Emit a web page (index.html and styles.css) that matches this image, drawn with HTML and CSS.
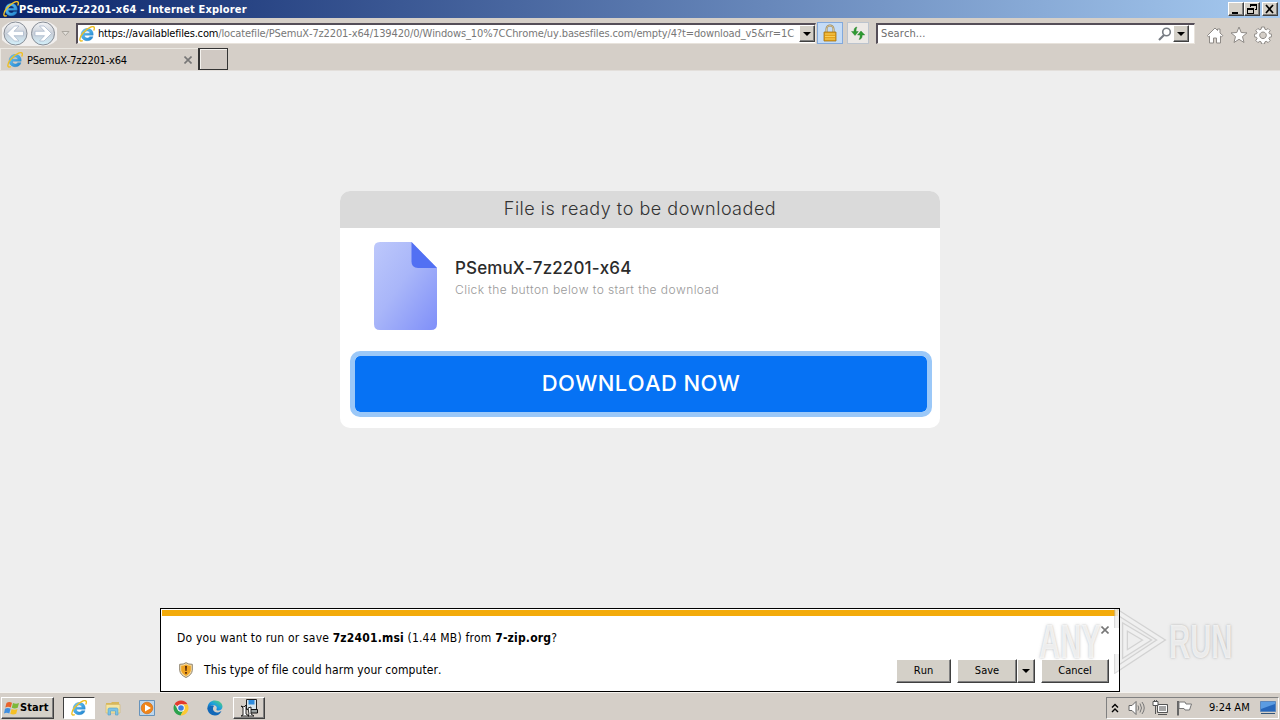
FILE: index.html
```html
<!DOCTYPE html>
<html>
  <head>
    <meta charset="utf-8" />
    <title>PSemuX-7z2201-x64 - Internet Explorer</title>
    <link rel="stylesheet" href="styles.css">
  </head>
  <body>
    <svg class="defs">
      <defs>
        <linearGradient id="ie-blue" x1="0" y1="0" x2="1" y2="1">
          <stop offset="0" stop-color="#6fd0f8" />
          <stop offset="1" stop-color="#1b7fce" />
        </linearGradient>
        <linearGradient id="paper" x1="0" y1="0" x2="1" y2="1">
          <stop offset="0" stop-color="#bdc8fb" />
          <stop offset="0.45" stop-color="#a9b6f9" />
          <stop offset="1" stop-color="#7f8ff9" />
        </linearGradient>
        <linearGradient id="nav" x1="0" y1="0" x2="0" y2="1">
          <stop offset="0" stop-color="#f4f5f7" />
          <stop offset="0.5" stop-color="#c9cfd8" />
          <stop offset="1" stop-color="#d3f0fb" />
        </linearGradient>
        <linearGradient id="edge" x1="0" y1="1" x2="1" y2="0">
          <stop offset="0" stop-color="#0c59a4" />
          <stop offset="0.5" stop-color="#1b9de2" />
          <stop offset="1" stop-color="#5edb68" />
        </linearGradient>
        <symbol id="ie" viewBox="0 0 16 16">
          <path d="M14.200 9.200H5.400c.1 1.800 1.200 2.800 2.800 2.800 1.200 0 2-.5 2.400-1.300H14c-.8 2.600-2.800 4-5.700 4-3.700 0-6.100-2.400-6.100-6s2.500-6.200 6.200-6.200c3.800 0 6.100 2.600 5.800 6.700zM5.500 7.200h5.400c-.2-1.400-1.100-2.200-2.600-2.200s-2.500.8-2.800 2.200z" fill="url(#ie-blue)" stroke="#2d87c8" stroke-width=".4" />
          <path d="M3.800 14.600C-.3 16.500 0 11.700 4 7 8 2.300 14-.7 15.200 1.300c.5.900.1 2-.5 3.200" fill="none" stroke="#eebf25" stroke-width="1.400" />
        </symbol>
      </defs>
    </svg>

    <div class="titlebar">
      <svg class="icon16"><use href="#ie" /></svg>
      <span class="title">PSemuX-7z2201-x64 - Internet Explorer</span>
      <div class="window-buttons">
        <button class="win-btn"><svg viewBox="0 0 14 12"><path d="M3 9h6v2H3z" /></svg></button>
        <button class="win-btn"><svg viewBox="0 0 14 12"><path d="M5 1h7v6h-2V6h1V3H6v1H5zM2 5h7v6H2zm1 2v3h5V7z" fill-rule="evenodd" /></svg></button>
        <button class="win-btn close"><svg viewBox="0 0 14 12"><path d="M3 2l7 8M10 2l-7 8" stroke="#000" stroke-width="1.700" /></svg></button>
      </div>
    </div>

    <div class="toolbar">
      <svg class="nav-buttons" viewBox="0 0 74 30">
        <path d="M2 10Q8 3 16 3h27q8 0 14 7v12q-6 6-14 6H16q-8 0-14-6z" fill="#f1efee" />
        <g fill="url(#nav)" stroke="#878d96">
          <circle cx="15.500" cy="15.500" r="11.500" />
          <circle cx="43" cy="15.500" r="11.500" />
        </g>
        <g fill="#fff" stroke="#a3b3c8" stroke-width=".7">
          <path d="M7 15.500l7.500-7.500H19l-5 5.300h9.500v4.400H14l5 5.300h-4.500z" />
          <path d="M51.500 15.500L44 8h-4.500l5 5.300H35v4.400h9.500l-5 5.300H44z" />
        </g>
        <path d="M62 13.500h7l-3.500 4z" fill="#e4e1dc" stroke="#aaa69f" />
      </svg>
      <div class="field address">
        <svg class="icon16"><use href="#ie" /></svg>
        <div class="url"><span class="host">https://availablefiles.com</span><span class="path">/locatefile/PSemuX-7z2201-x64/139420/0/Windows_10%7CChrome/uy.basesfiles.com/empty/4?t=download_v5&amp;rr=1C</span></div>
        <button class="drop"></button>
      </div>
      <div class="tool lock">
        <svg viewBox="0 0 16 18">
          <path d="M4.500 9V5a3.500 3.500 0 0 1 7 0v4" fill="none" stroke="#98835b" stroke-width="2" />
          <path d="M4.500 8V5a3.500 3.500 0 0 1 7 0v3" fill="none" stroke="#e6d6a2" stroke-width=".8" />
          <path d="M2 8h12v9H2z" fill="#e5a21c" stroke="#a37314" stroke-width=".8" />
          <path d="M3 10h10M3 12.500h10M3 15h10" stroke="#f7cf5b" />
        </svg>
      </div>
      <div class="tool refresh">
        <svg viewBox="0 0 16 16">
          <path d="M7 2C4.500 2.200 4 4 4 6.500H1.500L5 10.500l3.300-4H6.100C6 4.500 6.200 3.500 7 2zM9 14.500c2.700-.3 3.200-2 3.200-4.500h2.600L11 6l-3.500 4h2.600c.1 2-.2 3-1.100 4.500z" fill="#2e9b32" stroke="#207a27" stroke-width=".4" />
        </svg>
      </div>
      <div class="field search">
        <span class="placeholder">Search...</span>
        <svg class="magnifier" viewBox="0 0 14 14"><circle cx="8.500" cy="5" r="3.800" fill="none" stroke="#777c83" stroke-width="1.600" /><path d="M6 8l-5 5" stroke="#777c83" stroke-width="2.200" /></svg>
        <button class="drop"></button>
      </div>
      <div class="ie-tools">
        <svg viewBox="0 0 18 18"><path d="M1.500 9.500L9 2l2.500 2.500V3h2.500v4l2.800 2.600-1.300 1.300-1-.8V17h-4v-5h-3v5h-4v-6.900l-1 .8z" /></svg>
        <svg viewBox="0 0 18 18"><path d="M9 1l2.200 5.500 5.800.4-4.500 3.700 1.500 5.900-5-3.200-5 3.200 1.500-5.900L1 6.900l5.800-.4z" /></svg>
        <svg viewBox="0 0 18 18"><path fill-rule="evenodd" d="M7.500 1h3l.4 2.200 1.300.6 1.900-1.300 2.100 2.100-1.300 1.900.6 1.300 2.100.4v2.600l-2.100.5-.6 1.300 1.300 1.900-2.100 2.100-1.900-1.300-1.300.6-.4 2.100h-3l-.4-2.100-1.300-.6-1.900 1.300-2.100-2.100 1.300-1.900-.6-1.300-2.100-.5V8.200l2.100-.4.6-1.300-1.300-1.900 2.100-2.100 1.900 1.300 1.300-.6zM9 6a3.300 3.300 0 1 0 .01 0z" /></svg>
      </div>
    </div>

    <div class="tabs">
      <div class="tab">
        <svg class="icon16"><use href="#ie" /></svg>
        <span class="tab-title">PSemuX-7z2201-x64</span>
        <svg class="x" viewBox="0 0 8 8"><path d="M.5.5l7 7M7.500.5l-7 7" /></svg>
      </div>
      <div class="new-tab"></div>
    </div>

    <div class="page">
      <div class="card">
        <div class="card-header"><span>File is ready to be downloaded</span></div>
        <div class="file">
          <svg class="file-icon" viewBox="0 0 63 88">
            <path d="M6 0h31.500L63 26v56q0 6-6 6H6q-6 0-6-6V6q0-6 6-6z" fill="url(#paper)" />
            <path d="M37.500 0L63 26H44q-6.500 0-6.500-6.500z" fill="#5270f3" />
          </svg>
          <div>
            <div class="file-name">PSemuX-7z2201-x64</div>
            <div class="file-hint">Click the button below to start the download</div>
          </div>
        </div>
        <button class="download"><span>DOWNLOAD NOW</span></button>
      </div>
    </div>

    <div class="notification">
      <div class="stripe"></div>
      <div class="question">
        <span>Do you want to run or save <b>7z2401.msi</b> (1.44 MB) from <b>7-zip.org</b>?</span>
        <svg class="x" viewBox="0 0 8 8"><path d="M.5.5l7 7M7.500.5l-7 7" /></svg>
      </div>
      <div class="warning">
        <svg class="shield" viewBox="0 0 14 16">
          <path d="M7 .7Q9.500 2.500 13.300 2.300v6Q12.800 13 7 15.500 1.200 13 .7 8.300v-6Q4.500 2.500 7 .7z" fill="#f6dca5" stroke="#8d8370" />
          <path d="M7 2.500q2 1.300 4.800 1.300V8.500Q11 12 7 13.900 3 12 2.200 8.500V3.800Q5 3.800 7 2.500z" fill="#efa321" />
          <path d="M6 4h2l-.4 5H6.400zM6.100 10h1.800v1.800H6.100z" fill="#5b2b0c" />
        </svg>
        <span class="warning-text">This type of file could harm your computer.</span>
        <button class="btn run">Run</button>
        <button class="btn save">Save</button>
        <button class="btn arrow"></button>
        <button class="btn cancel">Cancel</button>
      </div>
    </div>

    <div class="taskbar">
      <button class="start">
        <svg viewBox="0 0 16 16">
          <path d="M2.500 3Q5 1.200 8 2.800L6.800 7.500Q4 6 1.300 7.500z" fill="#e8632b" />
          <path d="M9 3q3 1.600 6 0l-1.300 4.800q-3 1.500-5.900 0z" fill="#7db83a" />
          <path d="M1 8.700q2.800-1.600 5.600 0L5.300 13.400Q2.500 12 0 13.400z" fill="#3f8fe0" />
          <path d="M7.600 9q3 1.500 5.900 0l-1.300 4.800q-3 1.500-5.900 0z" fill="#f5c025" />
        </svg>
        <span>Start</span>
      </button>
      <div class="task active"><svg class="icon16"><use href="#ie" /></svg></div>
      <div class="task">
        <svg viewBox="0 0 16 16">
          <path d="M1 3h5l1-1h7v5H1z" fill="#d8b75a" />
          <path d="M1 4.500h14V13H1z" fill="#f6e5a0" stroke="#d3b765" stroke-width=".6" />
          <path d="M3 15V9.500q0-1.500 1.500-1.500h7Q13 8 13 9.500V15h-2.500v-4h-5v4z" fill="#7dc2e5" stroke="#4f9dc6" stroke-width=".6" />
        </svg>
      </div>
      <div class="task">
        <svg viewBox="0 0 16 16">
          <path d="M.5.5h15v15H.5z" fill="#bdd6ec" stroke="#6793bb" />
          <circle cx="8" cy="8" r="5.800" fill="#f08519" stroke="#ce650c" stroke-width=".6" />
          <path d="M6 4.500L12 8l-6 3.500z" fill="#fff" />
        </svg>
      </div>
      <div class="task">
        <svg viewBox="0 0 16 16">
          <path d="M8 8L1.500 4.300A7.500 7.500 0 0 1 14.500 4.300L8 4.500z" fill="#e33b2e" />
          <path d="M8 8L4.500 9.500 1.500 4.300A7.500 7.500 0 0 0 7.500 15.500L11 10z" fill="#2ba24c" />
          <path d="M8 4.500h6.600A7.500 7.500 0 0 1 7.500 15.500L11.200 9z" fill="#fcc934" />
          <circle cx="8" cy="8" r="3.700" fill="#fff" />
          <circle cx="8" cy="8" r="2.800" fill="#3b7de0" />
        </svg>
      </div>
      <div class="task">
        <svg viewBox="0 0 16 16">
          <path d="M.5 7.500C1 3 4 .5 8 .5c4.500 0 7.500 3 7.500 6 0 2.500-2 4-4 4-1.500 0-2.500-.5-2-1.300C10.500 7 9 5.300 6.500 5.300 3.500 5.300 1 7 .5 10z" fill="url(#edge)" />
          <path d="M.5 8.500C1.500 5.500 5 5 7 6c-2.300 2.500-.5 6.500 3 6.500 2 0 3-.6 4.500-1.500C13 14 11 15.500 8 15.500c-4 0-7.500-3-7.500-7z" fill="#1268b8" />
        </svg>
      </div>
      <div class="task raised">
        <svg viewBox="0 0 18 18">
          <path d="M6.500.5h10v10h-10z" fill="#d7e4ea" stroke="#222" />
          <path d="M8.500 1h6v4.500h-6z" fill="#2d8bdd" />
          <path d="M10 10.500h7.500V14H9" fill="#99a0a0" stroke="#111" />
          <path d="M1 7l3 1 2-2v9l3 2H1l2-1V9zM8 9l3-1v7l3 2H8l1-2z" fill="#fff" stroke="#111" stroke-width=".9" />
        </svg>
      </div>
      <div class="tray">
        <svg class="chevrons" viewBox="0 0 8 10"><path d="M1 4.500l3-3 3 3M1 9l3-3 3 3" fill="none" stroke="#000" stroke-width="1.400" /></svg>
        <svg class="tray-icon" viewBox="0 0 17 16"><path d="M1 5.500h3L8 1.500v13l-4-4H1z" fill="#fff" stroke="#666" /><path d="M10 5.500q1.500 2.500 0 5M12 3.500q3 4.500 0 9M14 2q4.500 6 0 12" fill="none" stroke="#777" /></svg>
        <svg class="tray-icon" viewBox="0 0 17 16"><path d="M5.500 4.500h10v8h-10z" fill="#a5a5a5" stroke="#555" /><path d="M6.500 5.500h8v6h-8z" fill="none" stroke="#fff" /><path d="M1 1.500h5v4H1z" fill="#fff" stroke="#555" /><path d="M3.500 5.500V14M2.500 0v2M4.500 0v2M6 14.500h9" fill="none" stroke="#555" /></svg>
        <svg class="tray-icon flag" viewBox="0 0 17 16"><path d="M2 1v14.500" stroke="#666" stroke-width="2" /><path d="M3 2h6l1 2h5.500l-2 6H9L8 8.500H3z" fill="#fff" stroke="#777" /></svg>
        <span class="clock">9:24 AM</span>
        <svg class="desktop" viewBox="0 0 16 14"><path d="M.5.5h15v10H.5z" fill="#2767bb" stroke="#5d88bc" /><path d="M1 1h14v2L1 8z" fill="#5b9ce2" /><path d="M1 12h14v1H1z" fill="#325579" /></svg>
      </div>
    </div>

    <div class="watermark">
      <span>ANY</span>
      <svg viewBox="0 0 56 66">
        <path d="M4 20V4l44 28L4 61V46M12 19l22 13-22 14z" fill="none" stroke="#b8b8b8" stroke-width="6" stroke-opacity=".5" />
        <path d="M4 20V4l44 28L4 61V46M12 19l22 13-22 14z" fill="none" stroke="#fff" stroke-width="3.500" stroke-opacity=".65" />
      </svg>
      <span>RUN</span>
    </div>
  </body>
</html>
```
FILE: styles.css
```css
* {
  box-sizing: border-box;
}
body {
  display: flex;
  flex-direction: column;
  width: 1280px;
  height: 720px;
  margin: 0;
  overflow: hidden;
  position: relative;
  background: #eee;
  font-family: "DejaVu Sans Condensed", "DejaVu Sans", sans-serif;
  font-stretch: condensed;
  font-kerning: none;
  font-size: 11px;
  color: #000;
  white-space: nowrap;
}
svg {
  display: block;
  flex: none;
}
button {
  padding: 0;
  margin: 0;
  font: inherit;
  color: #000;
  background: #d4d0c8;
  border: 1px solid;
  border-color: #fff #404040 #404040 #fff;
  box-shadow: inset -1px -1px #808080;
}
.defs {
  position: absolute;
  width: 0;
  height: 0;
}
.icon16 {
  width: 16px;
  height: 16px;
}

/* title bar */
.titlebar {
  display: flex;
  align-items: center;
  height: 18px;
  padding: 0 2px 0 3px;
  background: linear-gradient(90deg, #0a246a, #a6caf0);
}
.title {
  flex: 1;
  color: #fff;
  font-weight: bold;
  letter-spacing: 0.17px;
}
.window-buttons {
  display: flex;
}
.win-btn {
  width: 16px;
  height: 14px;
}
.win-btn.close {
  margin-left: 2px;
}
.win-btn svg {
  width: 14px;
  height: 12px;
}

/* address row */
.toolbar {
  display: flex;
  align-items: center;
  height: 30px;
  background: #d5cfc8;
}
.nav-buttons {
  width: 74px;
  height: 30px;
}
.field {
  display: flex;
  align-items: center;
  height: 21px;
  background: #fff;
  border: 1px solid;
  border-width: 2px 1px 1px 2px;
  border-color: #554e58 #e8e3dc #e8e3dc #554e58;
}
.address {
  width: 740px;
  margin-left: 2px;
  padding-left: 1px;
}
.url {
  flex: 1;
  display: flex;
  overflow: hidden;
  margin-left: 3px;
}
.host {
  letter-spacing: -0.17px;
}
.path {
  color: #777;
  letter-spacing: -0.13px;
}
.drop {
  display: flex;
  align-items: center;
  justify-content: center;
  width: 16px;
  height: 17px;
}
.drop::after,
.arrow::after {
  content: "";
  border: 4px solid transparent;
  border-top-color: #000;
  border-bottom: 0;
}
.tool {
  display: flex;
  align-items: center;
  justify-content: center;
  height: 22px;
}
.lock {
  width: 26px;
  margin-left: 1px;
  background: #c5dcf6;
  border: 1px solid #82a9dc;
}
.lock svg {
  width: 16px;
  height: 18px;
}
.refresh {
  width: 22px;
  margin-left: 4px;
  background: #ece9e6;
  border: 1px solid #bcc4ce;
}
.refresh svg {
  width: 16px;
  height: 16px;
}
.search {
  width: 319px;
  margin-left: 7px;
  padding: 0 5px 0 3px;
}
.placeholder {
  flex: 1;
  color: #6d6d6d;
  letter-spacing: 0.1px;
}
.magnifier {
  width: 14px;
  height: 14px;
  margin-right: 1px;
}
.ie-tools {
  display: flex;
  gap: 6px;
  margin: 3px 0 0 11px;
}
.ie-tools svg {
  width: 18px;
  height: 18px;
  fill: #fff;
  stroke: #8e8a86;
}

/* tabs */
.tabs {
  display: flex;
  height: 23px;
  background: #d5cfc8;
  border-bottom: 1px solid #e3dfdb;
}
.tab {
  display: flex;
  align-items: center;
  width: 198px;
  padding: 1px 6px 0 6px;
  border-top: 1px solid #ebe8e2;
  border-left: 1px solid #ebe8e2;
}
.tab-title {
  flex: 1;
  margin-left: 4px;
  letter-spacing: -0.2px;
}
.x {
  width: 8px;
  height: 8px;
  fill: none;
  stroke: #777;
  stroke-width: 1.6;
}
.new-tab {
  width: 30px;
  height: 22px;
  background: #d0c9c3;
  border: 1px solid #333;
  border-width: 1px 1px 1px 2px;
  box-shadow: inset 1px 1px #f4f2ee;
}

/* download page */
.page {
  flex: 1;
  padding-top: 120px;
}
.card {
  width: 600px;
  height: 237px;
  margin: 0 auto;
  background: #fff;
  border-radius: 10px;
  overflow: hidden;
  font-family: Inter, sans-serif;
  font-stretch: normal;
}
.card-header {
  height: 37px;
  line-height: 36px;
  text-align: center;
  background: #dadada;
  color: #333;
  font-size: 18px;
  font-weight: 300;
  letter-spacing: 0.52px;
}
.file {
  display: flex;
  padding: 14px 34px 0;
  height: 123px;
}
.file-icon {
  width: 63px;
  height: 88px;
  margin-right: 18px;
}
.file-name {
  margin-top: 14px;
  line-height: 24px;
  color: #2b2b2b;
  font-size: 17px;
  font-weight: 500;
  letter-spacing: 0.12px;
}
.file-hint {
  line-height: 20px;
  color: #999;
  font-size: 12px;
  font-weight: 300;
  letter-spacing: 0.42px;
}
.download {
  display: block;
  width: 582px;
  height: 66px;
  margin-left: 10px;
  padding-bottom: 2px;
  background: #0672f4;
  background-clip: padding-box;
  border: 5px solid #9bc8f8;
  border-radius: 10px;
  box-shadow: none;
  color: #fff;
  font-size: 22px;
  font-weight: 500;
  letter-spacing: 0.4px;
}

/* download prompt */
.notification {
  position: absolute;
  left: 160px;
  top: 608px;
  width: 960px;
  height: 84px;
  padding: 2px;
  background: #fff;
  font-size: 12px;
}
.notification::after {
  content: "";
  position: absolute;
  inset: 0;
  z-index: 2;
  border: 1px solid #000;
}
.stripe {
  height: 6px;
  background: #f3ab0b;
}
.question {
  display: flex;
  justify-content: space-between;
  height: 34px;
  padding: 14px 9px 0 15px;
  line-height: 16px;
  letter-spacing: 0.19px;
}
.question .x {
  margin-top: -4px;
}
.warning {
  display: flex;
  align-items: center;
  height: 40px;
  padding: 0 9px 0 17px;
}
.shield {
  width: 14px;
  height: 16px;
}
.warning-text {
  flex: 1;
  margin-left: 11px;
  letter-spacing: 0.07px;
}
.btn {
  height: 24px;
  margin-top: 1px;
  font-size: 11px;
}
.run {
  width: 55px;
  margin-right: 6px;
}
.save {
  width: 60px;
}
.arrow {
  display: flex;
  align-items: center;
  justify-content: center;
  width: 18px;
  margin-right: 6px;
}
.cancel {
  width: 68px;
}

/* taskbar */
.taskbar {
  display: flex;
  align-items: center;
  height: 28px;
  padding: 2px 1px 0;
  background: #d5cfc8;
  border-top: 1px solid #f4f2ee;
}
.start {
  display: flex;
  align-items: center;
  width: 53px;
  height: 22px;
  padding-left: 2px;
  margin-right: 9px;
  font-weight: bold;
  letter-spacing: 0.1px;
}
.start svg {
  width: 16px;
  height: 16px;
}
.task {
  display: flex;
  align-items: center;
  justify-content: center;
  width: 32px;
  height: 22px;
  margin-right: 2px;
}
.task svg {
  width: 16px;
  height: 16px;
}
.active {
  background: #fff;
  border: 1px solid;
  border-color: #404040 #fff #fff #404040;
}
.raised {
  border: 1px solid;
  border-color: #fff #404040 #404040 #fff;
  box-shadow: inset -1px -1px #808080;
}
.raised svg {
  width: 18px;
  height: 18px;
}
.tray {
  display: flex;
  align-items: center;
  width: 173px;
  height: 22px;
  margin-left: auto;
  padding-left: 4px;
  border: 1px solid;
  border-color: #808080 #fff #fff #808080;
}
.chevrons {
  width: 8px;
  height: 10px;
  margin-right: 9px;
}
.tray-icon {
  width: 17px;
  height: 16px;
  margin-right: 7px;
}
.flag {
  margin-right: 16px;
}
.clock {
  flex: 1;
}
.desktop {
  width: 16px;
  height: 14px;
  margin-right: 2px;
}

.watermark {
  position: absolute;
  left: 1039px;
  top: 608px;
  display: flex;
  align-items: center;
  height: 66px;
  color: rgba(255, 255, 255, 0.75);
  font-family: "Liberation Sans", Arial, sans-serif;
  font-stretch: normal;
  font-weight: bold;
  font-size: 48px;
  text-shadow: 0 0 3px rgba(110, 110, 110, 0.5);
}
.watermark span {
  width: 74px;
  transform: scaleX(0.61);
  transform-origin: left;
}
.watermark svg {
  width: 56px;
  height: 66px;
}
```
